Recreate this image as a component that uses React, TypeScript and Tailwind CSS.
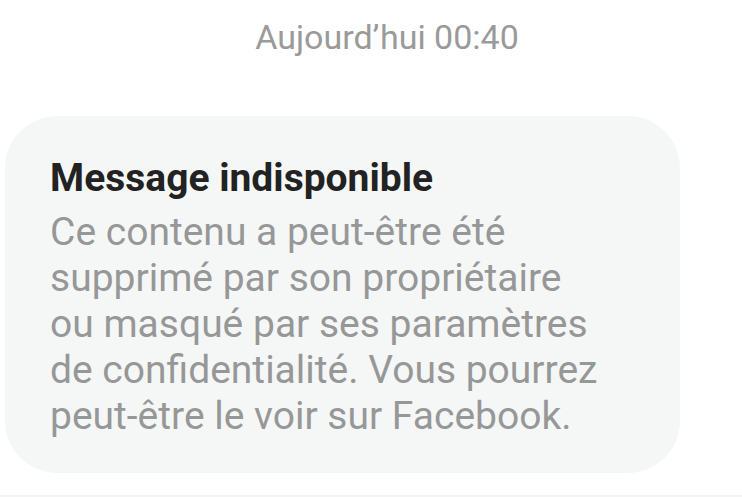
export default function App() {
  return (
    <div className="w-[742px] h-[497px] bg-white overflow-hidden flex flex-col font-['Roboto',sans-serif]">
      <div className="pt-[17px] text-center text-[34px] leading-[40px] text-[#9a9a9a] pl-[32px]">
        Aujourd’hui 00:40
      </div>
      <div className="mt-[59px] ml-[5px] w-[675px] h-[357px] rounded-[52px] bg-[#f5f7f7] pl-[45px] pt-[38px]">
        <div className="text-[39px] leading-[48px] font-bold text-[#222222] mb-[7px]">Message indisponible</div>
        <p className="text-[39px] leading-[46px] text-[#979797] w-[620px]">
          Ce contenu a peut-être été
          <br />
          supprimé par son propriétaire
          <br />
          ou masqué par ses paramètres
          <br />
          de confidentialité. Vous pourrez
          <br />
          peut-être le voir sur Facebook.
        </p>
      </div>
      <div className="mt-auto h-[2px] bg-[#f4f4f4]" />
    </div>
  );
}
